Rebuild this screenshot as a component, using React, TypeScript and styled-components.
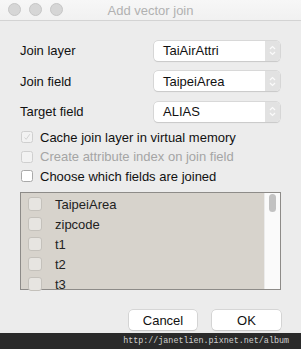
import React, { FC } from 'react';
import styled, { createGlobalStyle } from 'styled-components';

const GlobalStyle = createGlobalStyle`
  html, body {
    margin: 0;
    padding: 0;
    background: #ececec;
  }
  body {
    font-family: "Liberation Sans", Arial, sans-serif;
  }
`;

const Window = styled.div`
  width: 301px;
  height: 349px;
  display: flex;
  flex-direction: column;
  background: #ececec;
  overflow: hidden;
`;

const TitleBar = styled.div`
  height: 21px;
  display: grid;
  grid-template-columns: 1fr auto 1fr;
  align-items: center;
  background: linear-gradient(180deg, #f7f7f7 0%, #f1f1f1 100%);
  border-bottom: 1px solid #d3d3d3;
`;

const Lights = styled.div`
  display: flex;
  gap: 8px;
  padding-left: 8px;
`;

const Light = styled.span`
  width: 11px;
  height: 11px;
  border-radius: 50%;
  background: #d6d6d6;
  border: 0.5px solid #c6c6c6;
`;

const Title = styled.div`
  font-size: 13px;
  color: #b1b1b1;
  padding-top: 2px;
`;

const Body = styled.div`
  flex: 1;
  display: flex;
  flex-direction: column;
  padding: 20px 20px 0 20px;
`;

const FormGrid = styled.div`
  display: grid;
  grid-template-columns: 134px 126px;
  row-gap: 10.5px;
  align-items: center;
`;

const Label = styled.div`
  font-size: 13px;
  color: #111;
`;

const Select = styled.div`
  height: 20px;
  display: flex;
  align-items: stretch;
  background: #fff;
  border-radius: 4px;
  box-shadow: 0 0 0 0.5px #c3c3c3, 0 1px 1px rgba(0, 0, 0, 0.12);
  overflow: hidden;
`;

const SelectText = styled.div`
  flex: 1;
  display: flex;
  align-items: center;
  padding-left: 9px;
  font-size: 13px;
  color: #111;
`;

const Stepper = styled.div`
  width: 15px;
  display: flex;
  align-items: center;
  justify-content: center;
  background: #e2e2e2;
`;

const CheckList = styled.div`
  margin-top: 6px;
  display: flex;
  flex-direction: column;
`;

const CheckRow = styled.div<{ $disabled?: boolean }>`
  height: 19.5px;
  display: flex;
  align-items: center;
  gap: 7px;
  padding-left: 1px;
  font-size: 13px;
  color: ${p => (p.$disabled ? '#a5a5a5' : '#111')};
`;

const Box = styled.span<{ $disabled?: boolean }>`
  width: 10px;
  height: 10px;
  border-radius: 2.5px;
  background: ${p => (p.$disabled ? '#f2f2f2' : '#fff')};
  border: 0.5px solid ${p => (p.$disabled ? '#cfcfcf' : '#a9a9a9')};
  display: flex;
  align-items: center;
  justify-content: center;
`;

const FieldList = styled.div`
  margin-top: 6px;
  height: 96px;
  display: flex;
  border: 1px solid #8d8b88;
  background: #d7d3cc;
`;

const Items = styled.div`
  flex: 1;
  display: flex;
  flex-direction: column;
  padding-top: 1px;
`;

const Item = styled.div`
  height: 20px;
  flex-shrink: 0;
  display: flex;
  align-items: center;
  gap: 13px;
  padding-left: 7px;
  font-size: 13px;
  color: #222;
`;

const ItemBox = styled.span`
  width: 12px;
  height: 12px;
  border-radius: 3px;
  background: #e7e5e1;
  border: 0.5px solid #c4c1bb;
`;

const ScrollTrack = styled.div`
  width: 15px;
  background: #fafafa;
  border-left: 1px solid #ebebeb;
  display: flex;
  justify-content: center;
  padding-top: 1px;
`;

const Thumb = styled.div`
  width: 7px;
  height: 18px;
  border-radius: 4px;
  background: #c2c2c2;
`;

const Buttons = styled.div`
  margin-top: 20px;
  display: flex;
  justify-content: flex-end;
  gap: 15px;
  padding-right: 0px;
`;

const Button = styled.div<{ $w: number }>`
  width: ${p => p.$w}px;
  height: 20px;
  display: flex;
  align-items: center;
  justify-content: center;
  background: #fff;
  border-radius: 4px;
  box-shadow: 0 0 0 0.5px #c0c0c0, 0 1px 1px rgba(0, 0, 0, 0.12);
  font-size: 13px;
  color: #111;
`;

const Credit = styled.div`
  margin-top: 3px;
  height: 17px;
  background: #2a2a2a;
  display: flex;
  align-items: center;
  justify-content: flex-end;
  padding-right: 12px;
  font-family: "Liberation Mono", "Courier New", monospace;
  font-size: 8.4px;
  color: #d0d0d0;
`;

const Chevrons: FC = () => (
  <svg width="7" height="11" viewBox="0 0 7 11">
    <path d="M1 4 L3.5 1.5 L6 4" fill="none" stroke="#fbfbfb" strokeWidth="1.2" />
    <path d="M1 7 L3.5 9.5 L6 7" fill="none" stroke="#fbfbfb" strokeWidth="1.2" />
  </svg>
);

const Tick: FC = () => (
  <svg width="8" height="8" viewBox="0 0 8 8">
    <path d="M1.5 4.5 L3.2 6.3 L6.8 1.2" fill="none" stroke="#d2d2d2" strokeWidth="1" />
  </svg>
);

const rows = [
  { label: 'Join layer', value: 'TaiAirAttri' },
  { label: 'Join field', value: 'TaipeiArea' },
  { label: 'Target field', value: 'ALIAS' },
];

const fields = ['TaipeiArea', 'zipcode', 't1', 't2', 't3'];

const App: FC = () => {
  return (
    <Window>
      <GlobalStyle />
      <TitleBar>
        <Lights>
          <Light />
          <Light />
          <Light />
        </Lights>
        <Title>Add vector join</Title>
        <div />
      </TitleBar>
      <Body>
        <FormGrid>
          {rows.map(r => (
            <React.Fragment key={r.label}>
              <Label>{r.label}</Label>
              <Select>
                <SelectText>{r.value}</SelectText>
                <Stepper>
                  <Chevrons />
                </Stepper>
              </Select>
            </React.Fragment>
          ))}
        </FormGrid>
        <CheckList>
          <CheckRow>
            <Box $disabled>
              <Tick />
            </Box>
            Cache join layer in virtual memory
          </CheckRow>
          <CheckRow $disabled>
            <Box $disabled />
            Create attribute index on join field
          </CheckRow>
          <CheckRow>
            <Box />
            Choose which fields are joined
          </CheckRow>
        </CheckList>
        <FieldList>
          <Items>
            {fields.map(f => (
              <Item key={f}>
                <ItemBox />
                {f}
              </Item>
            ))}
          </Items>
          <ScrollTrack>
            <Thumb />
          </ScrollTrack>
        </FieldList>
        <Buttons>
          <Button $w={68}>Cancel</Button>
          <Button $w={69}>OK</Button>
        </Buttons>
      </Body>
      <Credit>http://janetlien.pixnet.net/album</Credit>
    </Window>
  );
};

export default App;
